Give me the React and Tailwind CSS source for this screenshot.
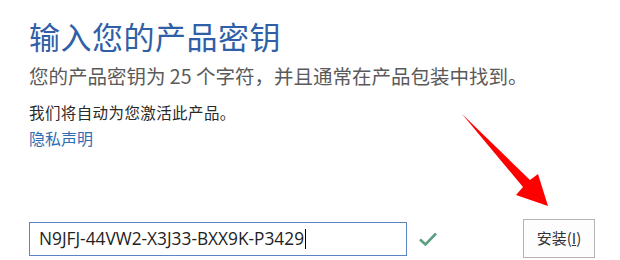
export default function App() {
  return (
    <div className="relative w-[620px] h-[260px] bg-white overflow-hidden" style={{ fontFamily: '"Noto Sans CJK SC", "Noto Sans", sans-serif' }}>
      <div className="flex flex-col pl-[29px] pr-[25px]">
        <div className="mt-[17px] text-[31px] leading-[38px] text-[#2f5fa6] tracking-[0.5px]">输入您的产品密钥</div>
        <div className="mt-[8px] text-[19.5px] leading-[26px] text-[#5a5a5a]">您的产品密钥为 25 个字符，并且通常在产品包装中找到。</div>
        <div className="mt-[13px] text-[15.5px] leading-[20px] tracking-[0.4px] text-[#2a2a2a]">我们将自动为您激活此产品。</div>
        <div className="mt-[6px] text-[16px] leading-[20px] text-[#2f6db5]">隐私声明</div>
        <div className="mt-[71px] flex items-center">
          <div className="w-[378px] h-[34px] border border-[#5b85c2] flex items-center pl-[9px]">
            <span className="text-[17.3px] text-[#222]" style={{ fontFamily: '"Open Sans", "Liberation Sans", sans-serif' }}>N9JFJ-44VW2-X3J33-BXX9K-P3429</span>
            <span className="w-[1px] h-[20px] bg-black ml-[1px]" />
          </div>
          <svg width="20" height="16" viewBox="0 0 20 16" className="ml-[11px]">
            <path d="M2 8.5 L7.5 13.5 L18 2.5" fill="none" stroke="#5c9e82" strokeWidth="2.6" />
          </svg>
          <div className="ml-auto w-[72px] h-[39px] border border-[#b4b4b4] bg-[#fdfdfd] flex items-center justify-center text-[15px] text-[#333]">
            安装(<span className="underline">I</span>)
          </div>
        </div>
      </div>
      <svg className="absolute left-0 top-0 pointer-events-none" width="620" height="260" viewBox="0 0 620 260">
        <polygon points="462,114 530,180 538,174 548,206 516,195 523,187" fill="#ff0000" />
      </svg>
    </div>
  );
}
